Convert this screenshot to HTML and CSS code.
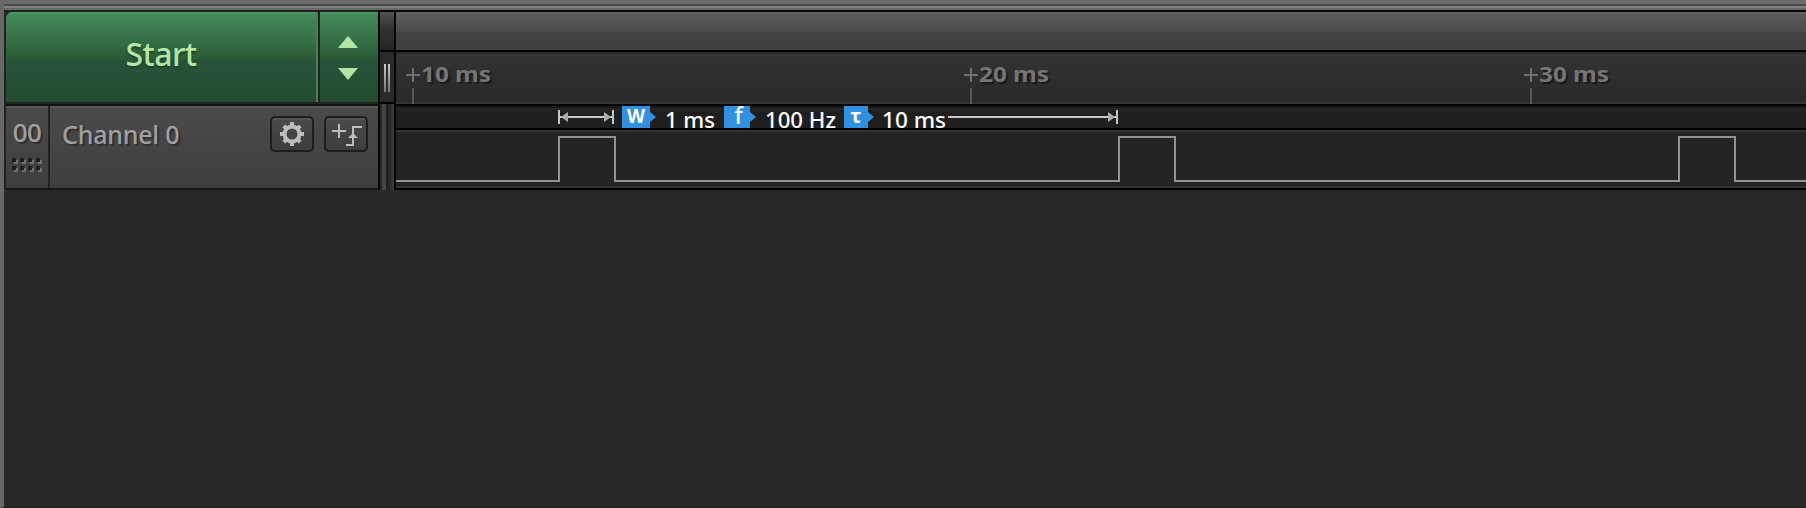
FILE: index.html
```html
<!DOCTYPE html>
<html lang="en">
<head>
<meta charset="utf-8">
<title>Logic Analyzer</title>
<link rel="stylesheet" href="styles.css">
</head>
<body>
<div class="titlebar"></div>
<div class="window">
  <div class="sidebar">
    <div class="start">
      <div class="start-main"><span>Start</span></div>
      <svg class="start-steps" width="58" height="90" viewBox="0 0 58 90" fill="#b3e6a5">
        <path d="M28 24L38 36H18Z"/>
        <path d="M18 56H38L28 68Z"/>
      </svg>
    </div>
    <div class="channel">
      <div class="channel-index">
        <span>00</span>
        <svg width="30" height="14" viewBox="0 0 30 14">
          <path fill="#707070" d="M2 2h4v4h-4zM10 2h4v4h-4zM18 2h4v4h-4zM26 2h4v4h-4zM2 10h4v4h-4zM10 10h4v4h-4zM18 10h4v4h-4zM26 10h4v4h-4z"/>
          <path fill="#1f1f1f" d="M0 0h4v4h-4zM8 0h4v4h-4zM16 0h4v4h-4zM24 0h4v4h-4zM0 8h4v4h-4zM8 8h4v4h-4zM16 8h4v4h-4zM24 8h4v4h-4z"/>
        </svg>
      </div>
      <div class="channel-body">
        <span class="channel-name">Channel 0</span>
        <div class="button">
          <svg width="44" height="36" viewBox="0 0 44 36">
            <circle cx="22" cy="18" r="7.5" fill="none" stroke="#bdbdbd" stroke-width="4"/>
            <path stroke="#bdbdbd" stroke-width="4" d="M22 6v5M22 25v5M10 18h5M29 18h5M13.8 9.8l3 3M27.2 23.2l3 3M30.2 9.8l-3 3M16.800 23.200l-3 3"/>
          </svg>
        </div>
        <div class="button">
          <svg width="44" height="36" viewBox="0 0 44 36" fill="none" stroke="#bdbdbd" stroke-width="2">
            <path d="M8 15H22M15 8V22M38 11H29V29H22"/>
            <path fill="#bdbdbd" stroke="none" d="M29 17l5 5H24Z"/>
          </svg>
        </div>
      </div>
    </div>
  </div>
  <div class="splitter">
    <div class="splitter-cap"></div>
    <div class="splitter-grip"><i></i><i></i></div>
    <div class="splitter-rail"></div>
  </div>
  <div class="timeline">
    <div class="overview"></div>
    <svg class="ruler" width="1410" height="52" viewBox="0 0 1410 52">
      <g class="ruler-label">
        <text x="25" y="30" textLength="70" lengthAdjust="spacingAndGlyphs">10 ms</text>
        <text x="583" y="30" textLength="70" lengthAdjust="spacingAndGlyphs">20 ms</text>
        <text x="1143" y="30" textLength="70" lengthAdjust="spacingAndGlyphs">30 ms</text>
      </g>
      <path stroke="#6f6f6f" stroke-width="2" d="M10 23h14M17 16v14M568 23h14M575 16v14M1128 23h14M1135 16v14"/>
      <path stroke="#5a5a5a" stroke-width="2" d="M17 36v16M575 36v16M1135 36v16"/>
    </svg>
    <svg class="measure" width="1410" height="26" viewBox="0 0 1410 26">
      <path stroke="#c6c6c6" stroke-width="2" d="M163 6v14M217 6v14M164 13H216M552 13H720M721 6v14"/>
      <path fill="#aaa" d="M165 13l7-5v10zM215 13l-7-5v10zM719 13l-7-5v10z"/>
      <path fill="#3290e0" d="M226 2h28v6l6 5l-6 5v6h-28zM328 2h26v6l6 5l-6 5v6h-26zM448 2h24v6l6 5l-6 5v6h-24z"/>
      <g class="tag">
        <text x="240" y="19" textLength="18" lengthAdjust="spacingAndGlyphs">W</text>
        <text class="tag-f" x="342.500" y="20">f</text>
        <text x="460" y="19">τ</text>
      </g>
      <g class="value">
        <text x="269" y="24" textLength="50" lengthAdjust="spacingAndGlyphs">1 ms</text>
        <text x="369" y="24" textLength="71" lengthAdjust="spacingAndGlyphs">100 Hz</text>
        <text x="486" y="24" textLength="64" lengthAdjust="spacingAndGlyphs">10 ms</text>
      </g>
    </svg>
    <svg class="wave" width="1410" height="60" viewBox="0 0 1410 60">
      <path fill="none" stroke="#929292" stroke-width="2" d="M0 51H163V7H219V51H723V7H779V51H1283V7H1339V51H1410"/>
    </svg>
  </div>
</div>
</body>
</html>
```
FILE: styles.css
```css
* { box-sizing: border-box; }
body {
  margin: 0;
  width: 1806px;
  height: 508px;
  overflow: hidden;
  background: #282828;
  border-left: 4px solid #686868;
  border-bottom: 1px solid #211e21;
  font-family: "Noto Sans", "Open Sans", sans-serif;
}
svg { display: block; }
.titlebar {
  height: 10px;
  margin-left: -4px;
  background: linear-gradient(#6b6b6b 4px, #494949 4px 6px, #808080 6px 8px, #686868 8px);
}
.window { display: flex; height: 180px; }
.sidebar {
  width: 374px;
  border-left: 2px solid #222;
  background: #222;
}
.start {
  display: flex;
  gap: 2px;
  height: 94px;
  padding-top: 2px;
}
.start-main, .start-steps {
  height: 90px;
  background: linear-gradient(#4b9661 0 2px, #44895a 2px, #367047 28px, #2b5c38 46px, #28543a 48px, #234c2f);
}
.start-main {
  width: 312px;
  border-right: 2px solid #4d7d59;
  border-top-left-radius: 6px;
  display: flex;
  justify-content: center;
}
.start-main span {
  color: #b3e6a5;
  font-size: 32px;
  letter-spacing: -0.6px;
  line-height: 44px;
  padding-top: 20px;
  font-weight: 500;
  text-shadow: 0 2px 2px #1d402a;
}
.start-steps { width: 58px; }
.channel {
  display: flex;
  gap: 2px;
  height: 86px;
  border-top: 2px solid #111;
  border-bottom: 2px solid #151515;
}
.channel-index, .channel-body {
  height: 82px;
  background: linear-gradient(#585858 0 2px, #4a4a4a 2px, #3e3e3e);
}
.channel-index {
  width: 42px;
  display: flex;
  flex-direction: column;
  align-items: center;
  color: #a0a0a0;
  font-size: 26px;
  font-weight: 500;
  letter-spacing: -0.5px;
  text-shadow: 2px 2px 1px #303030;
}
.channel-index span { line-height: 36px; padding-top: 8px; height: 52px; }
.channel-body {
  width: 328px;
  padding: 10px 10px 0 12px;
  display: flex;
  align-items: flex-start;
  gap: 10px;
}
.channel-name {
  flex: 1;
  color: #a0a0a0;
  font-size: 25px;
  font-weight: 500;
  letter-spacing: -0.2px;
  line-height: 36px;
  text-shadow: 2px 2px 1px #303030;
}
.button {
  width: 44px;
  height: 36px;
  border-radius: 5px;
  background: linear-gradient(#4b4b4b, #3c3c3c);
  box-shadow: inset 0 0 0 2px #1d1d1d, inset 0 4px 0 #555;
}
.splitter {
  width: 18px;
  border: solid #050505;
  border-width: 2px 2px 0;
}
.splitter-cap {
  height: 38px;
  background: linear-gradient(#505050, #303030 18px, #252525);
}
.splitter-grip {
  height: 54px;
  border-top: 2px solid #000;
  border-bottom: 2px solid #000;
  background: #2a2a2a;
  display: flex;
  justify-content: center;
  gap: 2px;
  padding-top: 12px;
}
.splitter-grip i { width: 2px; height: 28px; background: linear-gradient(#ccc, #777); }
.splitter-rail {
  height: 86px;
  background: linear-gradient(90deg, #292929 2px, #444 2px 6px, #202020 6px 8px, #252525 8px 10px, #303030 10px 12px, #393939 12px);
}
.timeline { width: 1410px; }
.overview {
  height: 42px;
  border-top: 2px solid #060606;
  border-bottom: 2px solid #000;
  background: linear-gradient(#646464, #5c5c5c 2px, #494949 20px, #414141 21px);
}
.ruler { background: linear-gradient(#292929 0 2px, #333 2px, #292929 50px, #333 50px); }
.ruler-label {
  fill: #757575;
  font-size: 22px;
  font-weight: 700;
  text-shadow: 2px 2px 1px #1b1b1b;
}
.measure { background: linear-gradient(#000 2px, #181818 2px 4px, #262626 4px 6px, #1f1f1f 6px 24px, #000 24px); overflow: visible; position: relative; }
.tag { fill: #fff; font-size: 20px; font-weight: 700; text-anchor: middle; }
.tag-f { font-size: 23px; font-weight: 500; }
.value { fill: #fff; font-size: 21.5px; font-weight: 500; }
.wave { background: linear-gradient(#323232 2px, #232323 2px 56px, #333 56px 58px, #000 58px); }
```
